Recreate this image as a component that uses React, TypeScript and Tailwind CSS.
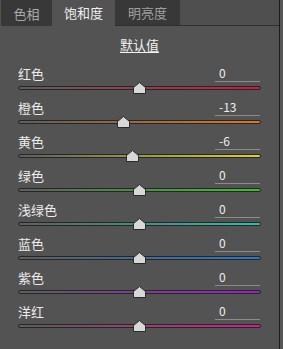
import React from "react";

const rows = [
  { label: "红色", value: "0", v: 0, color: "#c81e44" },
  { label: "橙色", value: "-13", v: -13, color: "#e07820" },
  { label: "黄色", value: "-6", v: -6, color: "#dcd232" },
  { label: "绿色", value: "0", v: 0, color: "#3cc030" },
  { label: "浅绿色", value: "0", v: 0, color: "#2ec0a8" },
  { label: "蓝色", value: "0", v: 0, color: "#2878cc" },
  { label: "紫色", value: "0", v: 0, color: "#9a22c4" },
  { label: "洋红", value: "0", v: 0, color: "#d0208c" },
];

const font = { fontFamily: '"Noto Sans CJK SC", "DejaVu Sans", sans-serif' };

function Thumb() {
  return (
    <svg width="13" height="12" viewBox="0 0 13 12">
      <path d="M0.5 11.5 V5.5 L6.5 0.5 L12.5 5.5 V11.5 Z" fill="#d8d8d8" stroke="#2a2a2a" strokeWidth="1" />
    </svg>
  );
}

export default function App() {
  return (
    <div className="w-[283px] h-[349px] bg-[#565656] flex text-[12px]" style={font}>
      <div className="w-[280px] h-full bg-[#535353] border-r border-[#1c1c1c] flex flex-col">
        <div className="flex h-[27px] pl-[1px]">
          <div className="w-[51px] h-[26px] bg-[#383838] text-[#a8a8a8] flex items-center justify-center text-[13px] leading-none">色相</div>
          <div className="w-[63px] h-[27px] bg-[#535353] text-[#f0f0f0] flex items-start pt-[6px] justify-center text-[13px] leading-none">饱和度</div>
          <div className="w-[65px] h-[26px] bg-[#383838] text-[#a0a0a0] flex items-center justify-center text-[13px] leading-none border-b border-[#2e2e2e]">明亮度</div>
          <div className="flex-1 h-[26px] bg-[#4f4f4f] border-b border-[#2e2e2e]"></div>
        </div>
        <div className="h-[37px] flex justify-center pt-[10px]">
          <span className="text-[13px] leading-[16px] text-[#f2f2f2] underline underline-offset-2">默认值</span>
        </div>
        <div className="flex flex-col">
          {rows.map((r) => {
            const pos = 121 + (r.v / 100) * 121;
            return (
              <div key={r.label} className="h-[34px] flex flex-col">
                <div className="flex h-[18px] items-center pl-[18px] pr-[19px] justify-between">
                  <span className="text-[13px] leading-none text-[#ececec]">{r.label}</span>
                  <div className="w-[45px] h-[18px] border-b border-[#8c8c8c] pl-[4px] flex items-center text-[12px] leading-none text-[#f0f0f0]">
                    {r.value}
                  </div>
                </div>
                <div className="relative ml-[18px] w-[243px] mt-[4px] h-[4px] rounded-[2px] border border-[#262626]"
                  style={{ background: `linear-gradient(to right, #5e5e5e, ${r.color})` }}>
                  <div className="absolute top-[-5px]" style={{ left: pos - 7 }}>
                    <Thumb />
                  </div>
                </div>
              </div>
            );
          })}
        </div>
      </div>
    </div>
  );
}
